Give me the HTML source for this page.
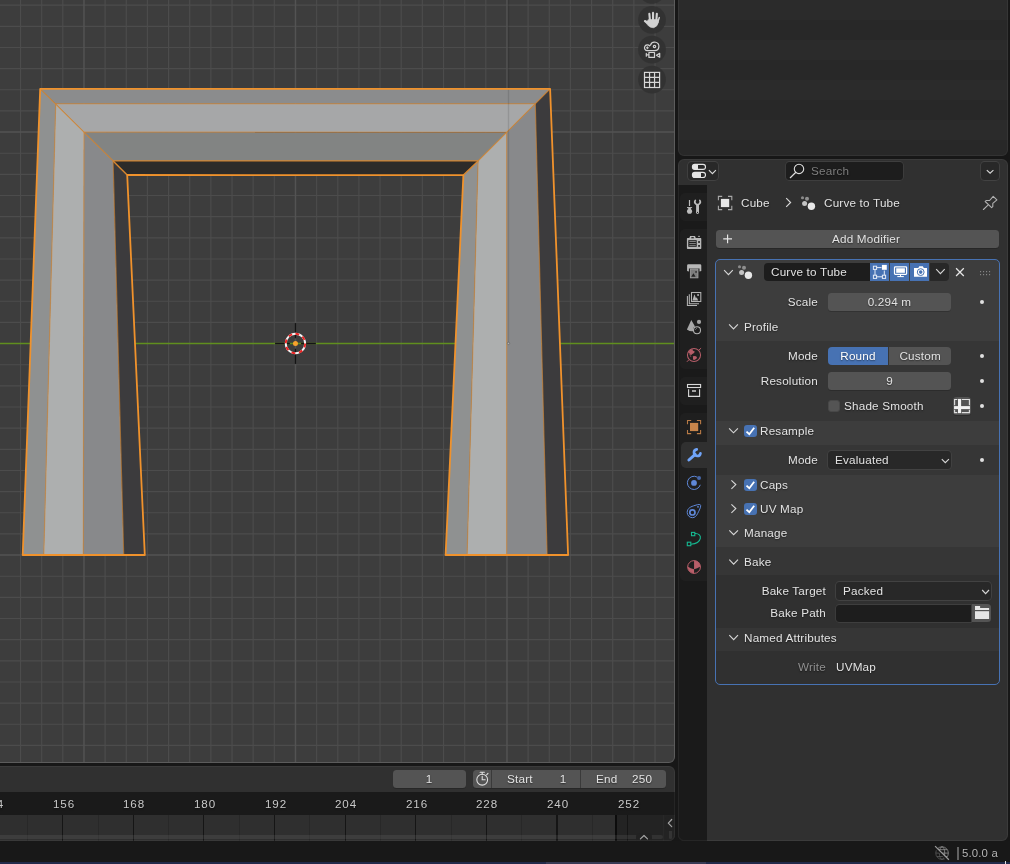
<!DOCTYPE html>
<html><head><meta charset="utf-8"><title>Blender</title>
<style>
*{box-sizing:border-box;margin:0;padding:0}
html,body{width:1010px;height:864px;overflow:hidden;background:#171717}
body{position:relative;font-family:"Liberation Sans",sans-serif;font-size:12px;color:#dcdcdc;line-height:1}
.abs,.abs>*{position:absolute}
div,svg,span{position:absolute}
.t{text-shadow:0 1px 1.5px rgba(0,0,0,0.5);will-change:transform;margin-top:-1px;white-space:nowrap;color:#e2e2e2;font-size:11.7px;line-height:14px;height:14px;letter-spacing:0.2px}
.tr{text-align:right}
.tc{text-align:center}
.fld{background:#545454;border-radius:3.5px;box-shadow:0 1px 0 rgba(0,0,0,0.18)}
.dd{background:#282828;box-shadow:0 0 0 0.9px #424242;border-radius:3.5px}
.txt{background:#1d1d1d;box-shadow:0 0 0 0.9px #3e3e3e;border-radius:3.5px}
.dot{margin:0.4px;width:4.2px;height:4.2px;border-radius:50%;background:#e0e0e0}
.cb{width:12.5px;height:12.5px;border-radius:3px;background:#4772b3}
.chev{fill:none;stroke:#d6d6d6;stroke-width:1.15;stroke-linecap:butt;stroke-linejoin:miter}
</style></head><body>

<!-- ================= 3D VIEWPORT ================= -->
<div id="vp" style="left:0;top:0;width:675px;height:763px;background:#3d3d3d;border-radius:0 0 6px 0;overflow:hidden">
<svg width="675" height="763" viewBox="0 0 675 763" style="left:0;top:0">
<g stroke="#4c4c4c" stroke-width="1.15"><line x1="20.52" y1="0" x2="20.52" y2="763"/><line x1="41.67" y1="0" x2="41.67" y2="763"/><line x1="62.82" y1="0" x2="62.82" y2="763"/><line x1="105.12" y1="0" x2="105.12" y2="763"/><line x1="126.27" y1="0" x2="126.27" y2="763"/><line x1="147.42" y1="0" x2="147.42" y2="763"/><line x1="168.57" y1="0" x2="168.57" y2="763"/><line x1="189.72" y1="0" x2="189.72" y2="763"/><line x1="210.87" y1="0" x2="210.87" y2="763"/><line x1="232.02" y1="0" x2="232.02" y2="763"/><line x1="253.17" y1="0" x2="253.17" y2="763"/><line x1="274.32" y1="0" x2="274.32" y2="763"/><line x1="316.62" y1="0" x2="316.62" y2="763"/><line x1="337.77" y1="0" x2="337.77" y2="763"/><line x1="358.92" y1="0" x2="358.92" y2="763"/><line x1="380.07" y1="0" x2="380.07" y2="763"/><line x1="401.22" y1="0" x2="401.22" y2="763"/><line x1="422.37" y1="0" x2="422.37" y2="763"/><line x1="443.52" y1="0" x2="443.52" y2="763"/><line x1="464.67" y1="0" x2="464.67" y2="763"/><line x1="485.82" y1="0" x2="485.82" y2="763"/><line x1="528.12" y1="0" x2="528.12" y2="763"/><line x1="549.27" y1="0" x2="549.27" y2="763"/><line x1="570.42" y1="0" x2="570.42" y2="763"/><line x1="591.57" y1="0" x2="591.57" y2="763"/><line x1="612.72" y1="0" x2="612.72" y2="763"/><line x1="633.87" y1="0" x2="633.87" y2="763"/><line x1="655.02" y1="0" x2="655.02" y2="763"/><line x1="0" y1="5.15" x2="675" y2="5.15"/><line x1="0" y1="26.30" x2="675" y2="26.30"/><line x1="0" y1="47.45" x2="675" y2="47.45"/><line x1="0" y1="68.60" x2="675" y2="68.60"/><line x1="0" y1="89.75" x2="675" y2="89.75"/><line x1="0" y1="110.90" x2="675" y2="110.90"/><line x1="0" y1="153.20" x2="675" y2="153.20"/><line x1="0" y1="174.35" x2="675" y2="174.35"/><line x1="0" y1="195.50" x2="675" y2="195.50"/><line x1="0" y1="216.65" x2="675" y2="216.65"/><line x1="0" y1="237.80" x2="675" y2="237.80"/><line x1="0" y1="258.95" x2="675" y2="258.95"/><line x1="0" y1="280.10" x2="675" y2="280.10"/><line x1="0" y1="301.25" x2="675" y2="301.25"/><line x1="0" y1="322.40" x2="675" y2="322.40"/><line x1="0" y1="364.70" x2="675" y2="364.70"/><line x1="0" y1="385.85" x2="675" y2="385.85"/><line x1="0" y1="407.00" x2="675" y2="407.00"/><line x1="0" y1="428.15" x2="675" y2="428.15"/><line x1="0" y1="449.30" x2="675" y2="449.30"/><line x1="0" y1="470.45" x2="675" y2="470.45"/><line x1="0" y1="491.60" x2="675" y2="491.60"/><line x1="0" y1="512.75" x2="675" y2="512.75"/><line x1="0" y1="533.90" x2="675" y2="533.90"/><line x1="0" y1="576.20" x2="675" y2="576.20"/><line x1="0" y1="597.35" x2="675" y2="597.35"/><line x1="0" y1="618.50" x2="675" y2="618.50"/><line x1="0" y1="639.65" x2="675" y2="639.65"/><line x1="0" y1="660.80" x2="675" y2="660.80"/><line x1="0" y1="681.95" x2="675" y2="681.95"/><line x1="0" y1="703.10" x2="675" y2="703.10"/><line x1="0" y1="724.25" x2="675" y2="724.25"/><line x1="0" y1="745.40" x2="675" y2="745.40"/></g><g stroke="#535353" stroke-width="1.5"><line x1="83.97" y1="0" x2="83.97" y2="763"/><line x1="295.47" y1="0" x2="295.47" y2="763"/><line x1="506.97" y1="0" x2="506.97" y2="763"/><line x1="0" y1="132.05" x2="675" y2="132.05"/><line x1="0" y1="555.05" x2="675" y2="555.05"/></g>
<line x1="0" y1="343.5" x2="675" y2="343.5" stroke="#608f1e" stroke-width="1.5"/>
<polygon points="40.2,88.9 550.1,88.9 535.3,103.7 55.7,103.7" fill="#8b8c8d"/><polygon points="40.2,88.9 55.7,103.7 43.8,555.0 22.7,555.0" fill="#8f9191"/><polygon points="550.1,88.9 535.3,103.7 547.1,555.0 568.1,555.0" fill="#3c3b3d"/><polygon points="55.7,103.7 535.3,103.7 506.7,132.2 84.0,132.1" fill="#a6a7a8"/><polygon points="55.7,103.7 84.0,132.1 83.3,555.0 43.8,555.0" fill="#adafaf"/><polygon points="535.3,103.7 506.7,132.2 506.7,555.0 547.1,555.0" fill="#88898b"/><polygon points="84.0,132.1 506.7,132.2 478.1,160.9 113.1,160.9" fill="#828483"/><polygon points="84.0,132.1 113.1,160.9 123.7,555.0 83.3,555.0" fill="#88898b"/><polygon points="506.7,132.2 478.1,160.9 467.1,555.0 506.7,555.0" fill="#adafaf"/><polygon points="113.1,160.9 478.1,160.9 463.4,175.1 127.2,175.0" fill="#2d2b29"/><polygon points="113.1,160.9 127.2,175.0 144.8,555.0 123.7,555.0" fill="#3c3b3d"/><polygon points="478.1,160.9 463.4,175.1 445.6,555.0 467.1,555.0" fill="#8f9191"/><line x1="55.7" y1="103.7" x2="535.3" y2="103.7" stroke="#d8872f" stroke-width="1.1" stroke-opacity="0.75"/><line x1="55.7" y1="103.7" x2="43.8" y2="555" stroke="#d8872f" stroke-width="1.2" stroke-opacity="0.6"/><line x1="535.3" y1="103.7" x2="547.1" y2="555" stroke="#d8872f" stroke-width="1.2" stroke-opacity="0.6"/><line x1="84.0" y1="132.1" x2="506.7" y2="132.2" stroke="#d8872f" stroke-width="1.1" stroke-opacity="0.6"/><line x1="84.0" y1="132.1" x2="83.3" y2="555" stroke="#d8872f" stroke-width="1.2" stroke-opacity="0.6"/><line x1="506.7" y1="132.2" x2="506.7" y2="555" stroke="#d8872f" stroke-width="1.2" stroke-opacity="0.6"/><line x1="113.1" y1="160.9" x2="478.1" y2="160.9" stroke="#d8872f" stroke-width="1.1" stroke-opacity="0.95"/><line x1="113.1" y1="160.9" x2="123.7" y2="555" stroke="#d8872f" stroke-width="1.2" stroke-opacity="0.6"/><line x1="478.1" y1="160.9" x2="467.1" y2="555" stroke="#d8872f" stroke-width="1.2" stroke-opacity="0.6"/><line x1="40.2" y1="88.9" x2="113.1" y2="160.9" stroke="#d8872f" stroke-width="1.1" stroke-opacity="0.85"/><line x1="113.1" y1="160.9" x2="127.2" y2="175.0" stroke="#d8872f" stroke-width="1.4" stroke-opacity="1"/><line x1="550.1" y1="88.9" x2="478.1" y2="160.9" stroke="#d8872f" stroke-width="1.1" stroke-opacity="0.85"/><line x1="478.1" y1="160.9" x2="463.4" y2="175.1" stroke="#d8872f" stroke-width="1.4" stroke-opacity="1"/><line x1="508.5" y1="0" x2="508.5" y2="343.4" stroke="#000" stroke-opacity="0.11" stroke-width="1.4"/><circle cx="508.5" cy="343.4" r="1.2" fill="#b4b4b4" stroke="#5a5a5a" stroke-width="0.6"/><polygon points="40.2,88.9 550.1,88.9 568.1,555.0 445.6,555.0 463.4,175.1 127.2,175.0 144.8,555.0 22.7,555.0" fill="none" stroke="#f0922c" stroke-width="1.8" stroke-linejoin="round"/>
<g stroke="#141414" stroke-width="1.4"><line x1="275.06" y1="343.5" x2="289.85999999999996" y2="343.5"/><line x1="301.06" y1="343.5" x2="315.85999999999996" y2="343.5"/><line x1="295.46" y1="323.1" x2="295.46" y2="338.3"/><line x1="295.46" y1="348.7" x2="295.46" y2="363.9"/></g><circle cx="295.46" cy="343.5" r="9.7" fill="none" stroke="#f4f4f4" stroke-width="1.9"/><circle cx="295.46" cy="343.5" r="9.7" fill="none" stroke="#ee2222" stroke-width="1.9" stroke-dasharray="3.809 3.809" transform="rotate(-90 295.46 343.5)"/><circle cx="295.46" cy="343.5" r="2.5" fill="#f7a12c"/>
<g>
<circle cx="652" cy="-10.2" r="13.9" fill="#323232" fill-opacity="0.94"/>
<circle cx="652" cy="19.8" r="13.9" fill="#323232" fill-opacity="0.94"/>
<circle cx="652" cy="49.7" r="13.9" fill="#323232" fill-opacity="0.94"/>
<circle cx="652" cy="79.6" r="13.9" fill="#323232" fill-opacity="0.94"/>
<!-- hand -->
<g transform="translate(636 0)" fill="#d2d2d2" stroke="#d2d2d2" stroke-linecap="round" stroke-linejoin="round">
<line x1="13.35" y1="13.9" x2="13.9" y2="20" stroke-width="2.1"/>
<line x1="17.05" y1="12.9" x2="17.05" y2="20" stroke-width="2.1"/>
<line x1="20.85" y1="13.9" x2="20.4" y2="20" stroke-width="2.1"/>
<line x1="23.3" y1="17.6" x2="21.8" y2="22" stroke-width="1.5"/>
<line x1="8.9" y1="21" x2="13" y2="23.6" stroke-width="2.1"/>
<path d="M12.8 19.5 L21.6 19.5 L22.5 22 Q21.6 26.8 17.6 27.7 Q14.6 27.9 12.6 26 L9.6 22.6 Z" stroke-width="0.6"/>
</g>
<!-- camera -->
<g transform="translate(636 32)" fill="none" stroke="#d2d2d2" stroke-width="1.2" stroke-linejoin="round" stroke-linecap="round">
<path d="M11.4 18.7 A2.9 2.9 0 1 1 13.62 13.94 L14.56 12.93 A4.3 4.3 0 1 1 18.6 18.7 Z"/>
<circle cx="18.5" cy="14.5" r="1.2"/>
<path d="M10.4 15.8h2M11.4 14.8v2" stroke-width="1"/>
<rect x="12.9" y="20.5" width="5.6" height="4.9"/>
<path d="M10.3 21.4v2.8M10.3 22.8h2.4"/>
<path d="M20.4 23.2L23.7 21.4V25.2Z"/>
</g>
<!-- grid -->
<g transform="translate(636 62)" fill="none" stroke="#d8d8d8" stroke-width="1.2">
<rect x="8.5" y="10.4" width="15.1" height="15.1"/>
<path d="M13.55 10.4v15.1M18.55 10.4v15.1M8.5 15.45h15.1M8.5 20.45h15.1"/>
</g>
</g>

</svg>
<div style="left:-6px;top:-6px;width:681px;height:769px;border:1px solid #5c5c5c;border-radius:6px"></div>
</div>

<!-- ================= OUTLINER ================= -->
<div id="outl" style="left:678.1px;top:-6px;width:330px;height:162px;border-radius:6px;overflow:hidden;background:#282828">
<div style="left:0;top:5.7px;width:330px;height:20px;background:#2b2b2b"></div>
<div style="left:0;top:45.7px;width:330px;height:20px;background:#2b2b2b"></div>
<div style="left:0;top:85.7px;width:330px;height:20px;background:#2b2b2b"></div>
<div style="left:0;top:125.7px;width:330px;height:20px;background:#2b2b2b"></div>
</div>

<!-- ================= PROPERTIES ================= -->
<div id="props" style="left:678.1px;top:158.9px;width:330px;height:682px;border-radius:6px;overflow:hidden;background:#303030">
<div style="left:-678.1px;top:-158.9px;width:1010px;height:864px">
<!-- tab column -->
<div style="left:678.1px;top:185.1px;width:28.8px;height:660px;background:#1a1a1a"></div>
<!-- tab group backgrounds -->
<div style="left:680px;top:193px;width:27px;height:28px;background:#1f1f1f;border-radius:5px 0 0 5px"></div>
<div style="left:680px;top:229px;width:27px;height:139.5px;background:#1f1f1f;border-radius:5px 0 0 5px"></div>
<div style="left:680px;top:377px;width:27px;height:28px;background:#1f1f1f;border-radius:5px 0 0 5px"></div>
<div style="left:680px;top:413px;width:27px;height:167.5px;background:#1f1f1f;border-radius:5px 0 0 5px"></div>
<div style="left:680.6px;top:441.9px;width:27px;height:26px;background:#303030;border-radius:5px 0 0 5px"></div>
<!--TABICONS-->

<!-- header -->
<div class="dd" style="left:688.3px;top:162.1px;width:29.5px;height:18px"></div>
<div class="txt" style="left:786.1px;top:162.1px;width:116.6px;height:18px"></div>
<div class="t" style="left:811px;top:164.5px;color:#7d7d7d">Search</div>
<div class="dd" style="left:980.9px;top:162px;width:18px;height:18.1px"></div>
<!--HDRICONS-->

<!-- breadcrumb -->
<div class="t" style="left:741px;top:196.5px">Cube</div>
<div class="t" style="left:824px;top:196.5px">Curve to Tube</div>
<!--BCICONS-->

<!-- add modifier -->
<div class="fld" style="left:715.5px;top:230px;width:283.5px;height:18.2px"></div>
<div class="t tc" style="left:766px;top:232.5px;width:200px">Add Modifier</div>

<!-- modifier panel -->
<div style="left:714.9px;top:258.9px;width:285.2px;height:426px;border-radius:5px;background:#3d3d3d;overflow:hidden">
 <div style="left:0;top:81.8px;width:285px;height:80.1px;background:#363636"></div>
 <div style="left:0;top:186.3px;width:285px;height:29.4px;background:#363636"></div>
 <div style="left:0;top:288px;width:285px;height:140px;background:#363636"></div>
 <div style="left:0;top:316.6px;width:285px;height:52.1px;background:#303030"></div>
 <div style="left:0;top:392.1px;width:285px;height:40px;background:#303030"></div>
</div>
<div style="left:714.9px;top:258.9px;width:285.2px;height:426px;border-radius:5px;border:1.2px solid #4772b3"></div>

<!-- modifier header -->
<div style="left:764.1px;top:262.9px;width:106px;height:18px;border-radius:4px 0 0 4px;background:#1d1d1d"></div>
<div class="t" style="left:771px;top:265.5px">Curve to Tube</div>
<div style="left:870px;top:262.9px;width:19px;height:18px;background:#4772b3"></div>
<div style="left:890px;top:262.9px;width:19px;height:18px;background:#4772b3"></div>
<div style="left:910px;top:262.9px;width:19px;height:18px;background:#4772b3"></div>
<div style="left:930.1px;top:262.9px;width:18.8px;height:18px;background:#282828;border-radius:0 4px 4px 0"></div>
<!--MODHDRICONS-->

<!-- Scale -->
<div class="t tr" style="left:718px;top:295.5px;width:100px">Scale</div>
<div class="fld" style="left:828px;top:293px;width:123px;height:18.2px"></div>
<div class="t tc" style="left:828px;top:295.5px;width:123px">0.294 m</div>
<div class="dot" style="left:979.5px;top:299.5px"></div>

<!-- Profile -->
<div class="t" style="left:744px;top:320.5px">Profile</div>
<div class="t tr" style="left:718px;top:349.5px;width:100px">Mode</div>
<div style="left:828px;top:347px;width:60px;height:18.2px;background:#4772b3;border-radius:4px 0 0 4px"></div>
<div class="t tc" style="left:828px;top:349.5px;width:60px;color:#fff">Round</div>
<div style="left:888.7px;top:347px;width:62.3px;height:18.2px;background:#545454;border-radius:0 4px 4px 0"></div>
<div class="t tc" style="left:888.7px;top:349.5px;width:62.3px">Custom</div>
<div class="dot" style="left:979.5px;top:353.5px"></div>

<div class="t tr" style="left:718px;top:374.5px;width:100px">Resolution</div>
<div class="fld" style="left:828px;top:372px;width:123px;height:18.2px"></div>
<div class="t tc" style="left:828px;top:374.5px;width:123px">9</div>
<div class="dot" style="left:979.5px;top:378.5px"></div>

<div class="cb" style="left:827.7px;top:399.7px;background:#545454;border:1px solid #484848"></div>
<div class="t" style="left:844px;top:399.5px">Shade Smooth</div>
<div class="fld" style="left:953.2px;top:397.2px;width:17.9px;height:17.9px"></div>
<div class="dot" style="left:979.5px;top:403.5px"></div>

<!-- Resample -->
<div class="cb" style="left:744px;top:424.7px"></div>
<div class="t" style="left:760px;top:424.5px">Resample</div>
<div class="t tr" style="left:718px;top:453.5px;width:100px">Mode</div>
<div class="dd" style="left:828px;top:451px;width:123px;height:18px"></div>
<div class="t" style="left:835px;top:453.5px">Evaluated</div>
<div class="dot" style="left:979.5px;top:457.5px"></div>

<div class="cb" style="left:744px;top:478.7px"></div>
<div class="t" style="left:760px;top:478.5px">Caps</div>
<div class="cb" style="left:744px;top:502.7px"></div>
<div class="t" style="left:760px;top:502.5px">UV Map</div>
<div class="t" style="left:744px;top:526.5px">Manage</div>
<div class="t" style="left:744px;top:555.5px">Bake</div>

<div class="t tr" style="left:726px;top:585px;width:100px">Bake Target</div>
<div class="dd" style="left:836.4px;top:582px;width:154.8px;height:17.8px"></div>
<div class="t" style="left:843px;top:585px">Packed</div>
<div class="t tr" style="left:726px;top:606.5px;width:100px">Bake Path</div>
<div class="txt" style="left:836.4px;top:604.8px;width:134.6px;height:16.9px;border-radius:3.5px 0 0 3.5px"></div>
<div style="left:972px;top:604px;width:19.2px;height:18.4px;background:#545454;border-radius:0 3.5px 3.5px 0"></div>

<div class="t" style="left:744px;top:631.5px">Named Attributes</div>
<div class="t tr" style="left:726px;top:660.5px;width:100px;color:#8f8f8f">Write</div>
<div class="t" style="left:836px;top:660.5px">UVMap</div>
<svg width="1010" height="864" viewBox="0 0 1010 864" style="left:0;top:0">
<!-- ===== header icons ===== -->
<g fill="none" stroke="#e4e4e4" stroke-width="1.1">
<rect x="692.4" y="164.4" width="13.1" height="5" rx="2.5"/>
<rect x="692.4" y="172.4" width="13.1" height="5.1" rx="2.55"/>
</g>
<path d="M694.9 164.4h3.1v5h-3.1a2.5 2.5 0 0 1 0-5z" fill="#e4e4e4"/>
<path d="M694.9 172.4h6.1v5.1h-6.1a2.5 2.5 0 0 1 0-5.1z" fill="#e4e4e4"/>
<path class="chev" d="M708.9 170.1L712.4 173.6L715.9 170.1"/>
<circle cx="799" cy="168.9" r="4.7" fill="none" stroke="#dcdcdc" stroke-width="1.1"/>
<path d="M795.6 172.5L790.3 177.7" stroke="#dcdcdc" stroke-width="1.2" stroke-linecap="round"/>
<path class="chev" d="M986.8 170.1L990.1 173.2L993.4 170.1"/>

<!-- ===== breadcrumb icons ===== -->
<g fill="none" stroke="#a8a8a8" stroke-width="1.1">
<path d="M718.4 200.2V196.4H722.2M728 196.4H731.8V200.2M731.8 205.8V209.6H728M722.2 209.6H718.4V205.8"/>
</g>
<rect x="720.9" y="198.9" width="8.3" height="8.2" fill="#e6e6e6"/>
<path class="chev" d="M786.2 198.2L790.6 202.5L786.2 206.8"/>
<g>
<circle cx="802.5" cy="197.7" r="1.55" fill="#8a8a8a"/>
<circle cx="807" cy="198.8" r="2" fill="#8f8f8f"/>
<circle cx="804.6" cy="203.4" r="2.5" fill="#c4c4c4"/>
<circle cx="811.4" cy="206.3" r="3.7" fill="#e8e8e8"/>
</g>
<g fill="none" stroke="#b0b0b0" stroke-width="1.1" stroke-linejoin="round" stroke-linecap="round">
<path d="M993.2 196.3L996.9 199.8L992.8 203.4V206.6L991.6 207.6L985.2 201.5L986.4 200.5H989.6Z"/>
<path d="M988 205.2L983.4 209.5"/>
</g>
<!-- add modifier plus -->
<path d="M723.2 238.9H732M727.6 234.5V243.3" stroke="#e6e6e6" stroke-width="1.15"/>

<!-- ===== modifier header ===== -->
<path class="chev" d="M724.1 270.2L728.45 274.7L732.8 270.2"/>
<g transform="translate(-63 69)">
<circle cx="802.5" cy="197.7" r="1.55" fill="#8a8a8a"/>
<circle cx="807" cy="198.8" r="2" fill="#8f8f8f"/>
<circle cx="804.6" cy="203.4" r="2.5" fill="#c4c4c4"/>
<circle cx="811.4" cy="206.3" r="3.7" fill="#e8e8e8"/>
</g>
<!-- edit mode icon -->
<g fill="none" stroke="#e4ebf7" stroke-width="1">
<rect x="873.4" y="266.2" width="3.2" height="3.2"/>
<rect x="873.4" y="275.2" width="3.2" height="3.2"/>
<rect x="882.4" y="275.2" width="3.2" height="3.2"/>
<path d="M876.6 267.6H881.5M875 269.4V275.2M876.6 276.8H882.4M884.3 270.5V275.2"/>
</g>
<rect x="881.9" y="264.9" width="4.9" height="4.9" fill="#fff"/>
<!-- monitor icon -->
<rect x="894.5" y="266.8" width="12.1" height="7.5" rx="0.8" fill="none" stroke="#fff" stroke-width="1.2"/>
<rect x="896.2" y="268.3" width="8.7" height="4.5" fill="#fff"/>
<path d="M900.5 274.5V276.5M897.3 276.6H903.8" stroke="#fff" stroke-width="1"/>
<!-- camera icon -->
<path d="M914 268H918.3L919.3 266.3H922.8L923.8 268H927V276.8H914Z" fill="#fff"/>
<circle cx="920.7" cy="272.1" r="3.4" fill="#fff" stroke="#4772b3" stroke-width="1"/>
<circle cx="920.7" cy="272.1" r="1.8" fill="#4772b3"/>
<path class="chev" d="M936.2 269.2L940.4 273.6L944.7 269.2"/>
<path d="M956.1 268.3L963.8 276M963.8 268.3L956.1 276" stroke="#e6e6e6" stroke-width="1.25"/>
<g fill="#8c8c8c">
<rect x="980" y="271.1" width="1.1" height="1.1"/><rect x="983" y="271.1" width="1.1" height="1.1"/><rect x="986" y="271.1" width="1.1" height="1.1"/><rect x="989" y="271.1" width="1.1" height="1.1"/>
<rect x="980" y="274.1" width="1.1" height="1.1"/><rect x="983" y="274.1" width="1.1" height="1.1"/><rect x="986" y="274.1" width="1.1" height="1.1"/><rect x="989" y="274.1" width="1.1" height="1.1"/>
</g>

<!-- ===== panel chevrons ===== -->
<path class="chev" d="M729.1 324.4L733.5 328.9L737.9 324.4"/>
<path class="chev" d="M729.1 428.3L733.5 432.8L737.9 428.3"/>
<path class="chev" d="M731.4 480.4L735.8 484.6L731.4 488.8"/>
<path class="chev" d="M731.4 504.4L735.8 508.6L731.4 512.8"/>
<path class="chev" d="M729.3 530.3L733.65 534.7L738 530.3"/>
<path class="chev" d="M729.3 559.6L733.65 564.2L738 559.6"/>
<path class="chev" d="M729.3 635.1L733.65 639.6L738 635.1"/>
<!-- dropdown chevrons -->
<path class="chev" d="M941.8 459.2L945.3 462.7L948.9 459.2"/>
<path class="chev" d="M982.2 590L985.6 593.6L989 590"/>
<!-- check marks -->
<g fill="none" stroke="#fff" stroke-width="1.8" stroke-linejoin="miter">
<path d="M746.5 431.6L749.3 434.2L754.2 427.7"/>
<path d="M746.5 485.6L749.3 488.2L754.2 481.7"/>
<path d="M746.5 509.6L749.3 512.2L754.2 505.7"/>
</g>
<!-- shade smooth icon -->
<g fill="none" stroke="#e0e0e0" stroke-width="1.1">
<path d="M954.6 405.3V399.5H957.3M961.8 399.5H969.4V405.3M969.4 409.8V412.6H961.8M957.3 412.6H954.6V409.8"/>
</g>
<rect x="958" y="398.95" width="3.1" height="14.2" fill="#f2f2f2"/>
<rect x="954.05" y="406.1" width="15.9" height="3" fill="#f2f2f2"/>
<!-- folder -->
<path d="M975 606.1H980.1V607.9H989.1V610H975Z" fill="#e6e6e6"/>
<rect x="975" y="611.2" width="14.1" height="7.8" fill="#e6e6e6"/>
</svg>
<svg width="1010" height="864" viewBox="0 0 1010 864" style="left:0;top:0">
<!-- tool -->
<g fill="#bdbdbd" stroke="none">
<rect x="688.9" y="200" width="1.2" height="6"/>
<rect x="687" y="207.1" width="5.1" height="1"/>
<rect x="688.2" y="208" width="2.7" height="1.2"/>
<circle cx="689.55" cy="211.2" r="2.55"/>
<rect x="696.1" y="204.5" width="2.9" height="8.3"/>
<circle cx="697.55" cy="212.6" r="1.45"/>
</g>
<path d="M695.3 200.4A2.7 2.7 0 1 0 699.8 200.4" fill="none" stroke="#bdbdbd" stroke-width="1.7" stroke-linecap="round"/>
<circle cx="697.55" cy="212.4" r="0.55" fill="#1f1f1f"/>
<!-- render -->
<g>
<path d="M687.6 238.1H689.3L690.1 236.1H695L695.8 238.1H700.6Q701.3 238.1 701.3 238.8V248.3Q701.3 249 700.6 249H687.6Q686.9 249 686.9 248.3V238.8Q686.9 238.1 687.6 238.1Z" fill="#b8b8b8"/>
<rect x="688.3" y="240.2" width="8.4" height="6.6" fill="#1f1f1f"/>
<path d="M689.3 241.5H695.8M689.3 243.5H695.8M689.3 245.4H695.8" stroke="#9a9a9a" stroke-width="0.8"/>
<rect x="698.2" y="241.1" width="1.7" height="1.8" fill="#1f1f1f"/>
<rect x="698.2" y="245" width="1.7" height="1.8" fill="#1f1f1f"/>
<rect x="691.3" y="237.1" width="2.5" height="1.2" fill="#1f1f1f"/>
<rect x="698" y="235.9" width="2" height="0.8" fill="#b8b8b8"/>
</g>
<!-- output -->
<g>
<path d="M688.4 264.3H700A1.3 1.3 0 0 1 701.3 265.6V271L699.5 271.6V268.6H688.9V271.6L687.1 271V265.6A1.3 1.3 0 0 1 688.4 264.3Z" fill="#b8b8b8"/>
<rect x="690.3" y="269" width="7.7" height="8.9" fill="#7c7c7c" stroke="#a8a8a8" stroke-width="0.7"/>
<path d="M691.2 276.8L693.4 273.2L695.6 276.8Z" fill="#222"/>
<rect x="695.3" y="271.2" width="1.5" height="1.5" fill="#222"/>
</g>
<!-- view layer -->
<g fill="none" stroke="#b4b4b4" stroke-width="1.05">
<rect x="691.5" y="292.5" width="9.3" height="9"/>
<path d="M689.3 294.3V303.7H699M687.4 296.1V305.5H697"/>
</g>
<path d="M692.4 300.6L694.4 294.3L696 298.3L696.7 297.3L698.2 300.6Z" fill="#b4b4b4"/>
<rect x="697.2" y="294.2" width="1.8" height="1.6" fill="#b4b4b4"/>
<!-- scene -->
<path d="M691.3 320L686.9 329.4Q690 331.6 693.2 331.2Q692.3 328 695 326.6Z" fill="#a8a8a8"/>
<circle cx="699" cy="321.9" r="2.1" fill="#a4a4a4"/>
<circle cx="697" cy="330.2" r="3.5" fill="none" stroke="#b4b4b4" stroke-width="1.05"/>
<path d="M695.4 329.6L696.6 328.4" stroke="#b4b4b4" stroke-width="0.8"/>
<!-- world -->
<circle cx="694" cy="354.95" r="6.55" fill="none" stroke="#b55d68" stroke-width="1.05"/>
<path d="M686.9 361.8L688.9 359.8M699 350L701.1 348.1" stroke="#b55d68" stroke-width="1"/>
<path d="M688.6 351.9L690.5 349.6L692.6 349.2L692.8 350.6L694.9 351.7L693.7 353.3L691.9 354.3L691.6 354.9L690.3 354.4L690.5 355.9L691.6 356.6L690.4 356.7L689.5 354.5L689.4 353L688.4 353.1Z" fill="#b55d68"/>
<path d="M692.8 356.3L695.1 355.9L697 357L696.5 358.7L694.2 360L693 359.4L693 357.5Z" fill="#b55d68"/>
<!-- collection -->
<g fill="none" stroke="#dadada" stroke-width="1.1">
<rect x="687.5" y="384.5" width="13.1" height="3"/>
<path d="M688.6 389.3V396.4H699.6V389.3"/>
</g>
<rect x="692" y="390.3" width="4" height="1.4" fill="#dadada"/>
<!-- object -->
<g fill="none" stroke="#b77a46" stroke-width="1.1">
<path d="M687.5 424.2V420.5H691.2M696.9 420.5H700.6V424.2M700.6 429.9V433.6H696.9M691.2 433.6H687.5V429.9"/>
</g>
<rect x="690" y="422.9" width="8.2" height="8.2" fill="#c8854b"/>
<!-- modifier wrench -->
<g fill="none" stroke="#70a4f8" stroke-linecap="round">
<path d="M688.9 460L695.2 454.4" stroke-width="3"/>
<path d="M700.5 453.2A3.3 3.3 0 1 1 696.8 449.4" stroke-width="2.6"/>
</g>
<!-- particles -->
<circle cx="694" cy="482.9" r="2.9" fill="#5f88d8"/>
<path d="M697.2 477.1A6.6 6.6 0 1 0 700.3 484.8" fill="none" stroke="#5f88d8" stroke-width="1"/>
<circle cx="699" cy="478" r="2" fill="#4768ab"/>
<!-- physics -->
<path d="M687.2 512.4C687.2 508 691 506.6 695 505.4C698.5 504.3 700.6 504 700.7 505.6C700.8 507.5 699.3 510.2 697.6 513.6C696.4 516 694.8 517.7 692.4 517.7C689.5 517.7 687.2 515.3 687.2 512.4Z" fill="none" stroke="#5f88d8" stroke-width="1"/>
<circle cx="692.4" cy="512.4" r="2.6" fill="none" stroke="#5f88d8" stroke-width="1.7"/>
<circle cx="698" cy="506.8" r="0.9" fill="#5f88d8"/>
<!-- constraints/curve data -->
<g fill="none" stroke="#16b891" stroke-width="1.1">
<rect x="691.5" y="532.4" width="3.3" height="3.3"/>
<rect x="687.3" y="542.2" width="3.5" height="3.5"/>
<path d="M694.9 533.6C703 533 702.6 543.6 690.9 544.2"/>
</g>
<!-- material -->
<circle cx="694.05" cy="567" r="6.4" fill="none" stroke="#b95e69" stroke-width="1"/>
<path d="M694.05 560.6A6.4 6.4 0 0 1 700.4 566.6Q697 569 694.05 569.2Z" fill="#b95e69"/>
<path d="M694.05 573.4A6.4 6.4 0 0 1 687.7 566.6Q690.5 569 694.05 569.2Z" fill="#b95e69"/>
</svg>

</div>

</div>

<!-- ================= TIMELINE ================= -->
<div id="tl" style="left:-6px;top:766px;width:681px;height:74.8px;border-radius:6px;overflow:hidden;background:#303030">
<div style="left:6px;top:-766px;width:1010px;height:864px">
<div style="left:0;top:791.6px;width:675px;height:23.2px;background:#1a1a1a"></div>
<div style="left:0;top:814.8px;width:675px;height:27px;background:#2f2f2f"></div>
<div style="left:616.2px;top:814.8px;width:60px;height:27px;background:#232323"></div>
<div style="left:26.9px;top:814.8px;width:1px;height:26px;background:#282828"></div><div style="left:62.1px;top:814.8px;width:1.2px;height:26px;background:#151515"></div><div style="left:97.5px;top:814.8px;width:1px;height:26px;background:#282828"></div><div style="left:132.7px;top:814.8px;width:1.2px;height:26px;background:#151515"></div><div style="left:168.1px;top:814.8px;width:1px;height:26px;background:#282828"></div><div style="left:203.3px;top:814.8px;width:1.2px;height:26px;background:#151515"></div><div style="left:238.8px;top:814.8px;width:1px;height:26px;background:#282828"></div><div style="left:274.0px;top:814.8px;width:1.2px;height:26px;background:#151515"></div><div style="left:309.4px;top:814.8px;width:1px;height:26px;background:#282828"></div><div style="left:344.6px;top:814.8px;width:1.2px;height:26px;background:#151515"></div><div style="left:380.0px;top:814.8px;width:1px;height:26px;background:#282828"></div><div style="left:415.2px;top:814.8px;width:1.2px;height:26px;background:#151515"></div><div style="left:450.6px;top:814.8px;width:1px;height:26px;background:#282828"></div><div style="left:485.8px;top:814.8px;width:1.2px;height:26px;background:#151515"></div><div style="left:521.2px;top:814.8px;width:1px;height:26px;background:#282828"></div><div style="left:556.4px;top:814.8px;width:1.2px;height:26px;background:#151515"></div><div style="left:591.9px;top:814.8px;width:1px;height:26px;background:#282828"></div><div style="left:627.1px;top:814.8px;width:1.2px;height:26px;background:#151515"></div><div style="left:662.5px;top:814.8px;width:1px;height:26px;background:#282828"></div><div style="left:615.4px;top:814.8px;width:1.6px;height:26px;background:#0c0c0c"></div>
<div style="left:-5px;top:834.9px;width:668.4px;height:3.8px;background:rgba(255,255,255,0.07);border-radius:2px"></div>
<div style="left:668.9px;top:817.5px;width:2.9px;height:21px;background:rgba(255,255,255,0.08);border-radius:1.5px"></div>
<div class="t tc" style="left:-26.9px;top:798.2px;width:40px;color:#c8c8c8;font-size:11.6px;letter-spacing:0.9px">144</div>
<div class="t tc" style="left:43.7px;top:798.2px;width:40px;color:#c8c8c8;font-size:11.6px;letter-spacing:0.9px">156</div>
<div class="t tc" style="left:114.3px;top:798.2px;width:40px;color:#c8c8c8;font-size:11.6px;letter-spacing:0.9px">168</div>
<div class="t tc" style="left:184.9px;top:798.2px;width:40px;color:#c8c8c8;font-size:11.6px;letter-spacing:0.9px">180</div>
<div class="t tc" style="left:255.6px;top:798.2px;width:40px;color:#c8c8c8;font-size:11.6px;letter-spacing:0.9px">192</div>
<div class="t tc" style="left:326.2px;top:798.2px;width:40px;color:#c8c8c8;font-size:11.6px;letter-spacing:0.9px">204</div>
<div class="t tc" style="left:396.8px;top:798.2px;width:40px;color:#c8c8c8;font-size:11.6px;letter-spacing:0.9px">216</div>
<div class="t tc" style="left:467.4px;top:798.2px;width:40px;color:#c8c8c8;font-size:11.6px;letter-spacing:0.9px">228</div>
<div class="t tc" style="left:538.0px;top:798.2px;width:40px;color:#c8c8c8;font-size:11.6px;letter-spacing:0.9px">240</div>
<div class="t tc" style="left:608.7px;top:798.2px;width:40px;color:#c8c8c8;font-size:11.6px;letter-spacing:0.9px">252</div>
<div class="fld" style="left:392.7px;top:769.9px;width:73.8px;height:18.3px"></div>
<div class="t tc" style="left:408.7px;top:773.2px;width:40px">1</div>
<div class="fld" style="left:472.9px;top:769.9px;width:193.3px;height:18.3px"></div>
<div style="left:491.2px;top:769.9px;width:1px;height:18.3px;background:#3a3a3a"></div>
<div style="left:580.2px;top:769.9px;width:1px;height:18.3px;background:#3a3a3a"></div>
<div class="t" style="left:507.3px;top:773.2px">Start</div>
<div class="t tc" style="left:543.4px;top:773.2px;width:40px">1</div>
<div class="t" style="left:596.3px;top:773.2px">End</div>
<div class="t" style="left:632.4px;top:773.2px">250</div>
<div style="left:665px;top:815.5px;width:12px;height:15.8px;background:#222;border-radius:4px"></div>
<div style="left:635.6px;top:833.3px;width:16.7px;height:10px;background:#222;border-radius:4px"></div>
<svg width="1010" height="864" viewBox="0 0 1010 864" style="left:0;top:0">
<g fill="none" stroke="#e0e0e0" stroke-width="1.05" stroke-linecap="round">
<circle cx="482.2" cy="779.7" r="5.4"/>
<path d="M482.2 774.3V772.4M480.1 772.3H484.4M482.2 776.3V779.8H485.2M486.6 774.8L488 773.3"/>
</g>
<g fill="none" stroke="#a4a4a4" stroke-width="1.2" stroke-linecap="round" stroke-linejoin="round">
<path d="M671.7 819.5L668.3 823.1L671.7 826.7"/>
<path d="M640.4 838.9L644 835.5L647.5 838.9"/>
</g>
</svg>
</div>
</div>

<div style="left:678.1px;top:-6px;width:330px;height:162px;border:1px solid rgba(255,255,255,0.055);border-radius:6px"></div>
<div style="left:678.1px;top:158.9px;width:330px;height:682px;border:1px solid rgba(255,255,255,0.055);border-radius:6px"></div>
<div style="left:-6px;top:766px;width:681px;height:74.8px;border:1px solid rgba(255,255,255,0.05);border-radius:6px"></div>
<!-- ================= STATUS BAR ================= -->
<div id="sb" style="left:0;top:841px;width:1010px;height:21px;background:#181818">
<div style="left:0;top:-841px;width:1010px;height:864px">
<div class="t" style="left:962.3px;top:846.6px;color:#b4b4b4;font-size:11.4px;letter-spacing:0.15px">5.0.0 a</div>
<div style="left:957px;top:847px;width:1.5px;height:13px;background:#626262"></div>
<svg width="1010" height="864" viewBox="0 0 1010 864" style="left:0;top:0">
<defs>
<clipPath id="cpa"><path d="M935.05 846.1L948.9 859.8L960 859.8L960 840L935 840Z"/></clipPath>
<clipPath id="cpb"><path d="M935.05 846.1L948.9 859.8L930 862L930 846Z"/></clipPath>
</defs>
<g fill="none" stroke="#5a5a5a" stroke-width="0.8" clip-path="url(#cpb)">
<circle cx="942.05" cy="853.1" r="6.3"/>
<ellipse cx="942.05" cy="853.1" rx="2.7" ry="6.3"/>
<path d="M935.8 853.1H948.3M936.9 849.7H947.2M936.9 856.5H947.2"/>
</g>
<g fill="none" stroke="#949494" stroke-width="0.8" clip-path="url(#cpa)">
<circle cx="942.05" cy="853.1" r="6.3"/>
<ellipse cx="942.05" cy="853.1" rx="2.7" ry="6.3"/>
<path d="M935.8 853.1H948.3M936.9 849.7H947.2M936.9 856.5H947.2"/>
</g>
<path d="M934.4 847.1L947.9 860.5" stroke="#181818" stroke-width="1.4"/>
<path d="M935.05 846.1L948.9 859.8" stroke="#9c9c9c" stroke-width="1.2"/>
</svg>
</div>

</div>
<div style="left:0;top:862px;width:1010px;height:2px;background:#222a4a"></div>
<div style="left:546px;top:862px;width:160px;height:2px;background:#383b55"></div>
<div style="left:1005px;top:861px;width:1px;height:3px;background:#ddd"></div>

</body></html>
